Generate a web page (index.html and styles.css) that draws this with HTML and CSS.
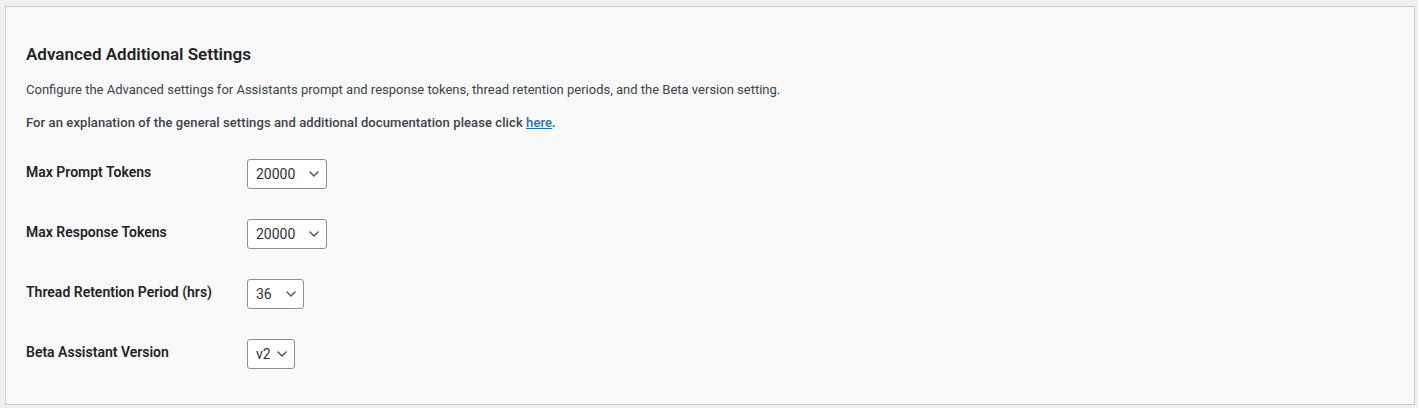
FILE: index.html
```html
<!DOCTYPE html>
<html lang="en">
<head>
<meta charset="utf-8">
<title>Advanced Additional Settings</title>
<link rel="stylesheet" href="styles.css">
</head>
<body>
<div class="wrap">
  <div class="panel">
    <h2 class="panel-title">Advanced Additional Settings</h2>
    <p class="desc">Configure the Advanced settings for Assistants prompt and response tokens, thread retention periods, and the Beta version setting.</p>
    <p class="desc desc-strong">For an explanation of the general settings and additional documentation please click <a href="#" class="link">here</a>.</p>
    <div class="form-table">
      <div class="row">
        <label class="row-label" for="max-prompt">Max Prompt Tokens</label>
        <div class="select-wrap">
          <select id="max-prompt" class="select select-tokens">
            <option>20000</option>
          </select>
          <svg class="chev" width="10" height="6" viewBox="0 0 10 6" aria-hidden="true"><polyline points="1,1 5,5 9,1" fill="none" stroke="#50575e" stroke-width="1.5" stroke-linecap="round" stroke-linejoin="round"/></svg>
        </div>
      </div>
      <div class="row">
        <label class="row-label" for="max-response">Max Response Tokens</label>
        <div class="select-wrap">
          <select id="max-response" class="select select-tokens">
            <option>20000</option>
          </select>
          <svg class="chev" width="10" height="6" viewBox="0 0 10 6" aria-hidden="true"><polyline points="1,1 5,5 9,1" fill="none" stroke="#50575e" stroke-width="1.5" stroke-linecap="round" stroke-linejoin="round"/></svg>
        </div>
      </div>
      <div class="row">
        <label class="row-label" for="retention">Thread Retention Period (hrs)</label>
        <div class="select-wrap">
          <select id="retention" class="select select-hours">
            <option>36</option>
          </select>
          <svg class="chev" width="10" height="6" viewBox="0 0 10 6" aria-hidden="true"><polyline points="1,1 5,5 9,1" fill="none" stroke="#50575e" stroke-width="1.5" stroke-linecap="round" stroke-linejoin="round"/></svg>
        </div>
      </div>
      <div class="row">
        <label class="row-label" for="beta">Beta Assistant Version</label>
        <div class="select-wrap">
          <select id="beta" class="select select-version">
            <option>v2</option>
          </select>
          <svg class="chev" width="10" height="6" viewBox="0 0 10 6" aria-hidden="true"><polyline points="1,1 5,5 9,1" fill="none" stroke="#50575e" stroke-width="1.5" stroke-linecap="round" stroke-linejoin="round"/></svg>
        </div>
      </div>
    </div>
  </div>
</div>
</body>
</html>
```
FILE: styles.css
```css
* {
  box-sizing: border-box;
}

html, body {
  margin: 0;
  padding: 0;
  background: #f0f0f1;
}

body {
  font-family: Roboto, "Liberation Sans", sans-serif;
  color: #3c434a;
  font-size: 13px;
}

.wrap {
  padding: 6px 3px 0 5px;
}

.panel {
  background: #f9f9f9;
  border: 1px solid #c9cacc;
  height: 399px;
  padding: 36px 20px 20px 20px;
}

.panel-title {
  margin: 0;
  font-size: 17px;
  line-height: 22px;
  font-weight: 600;
  color: #1d2327;
}

.desc {
  margin: 15px 0 0 0;
  font-size: 13px;
  line-height: 20px;
  color: #3c434a;
}

.desc-strong {
  margin-top: 13px;
  font-weight: 500;
  letter-spacing: 0.09px;
  color: #3c434a;
}

.link {
  color: #2271b1;
  text-decoration: underline;
}

.form-table {
  margin-top: 11px;
  display: flex;
  flex-direction: column;
}

.row {
  display: flex;
  align-items: center;
  height: 60px;
}

.row-label {
  align-self: flex-start;
  padding-top: 18px;
  width: 221px;
  flex: none;
  font-size: 14px;
  line-height: 20px;
  font-weight: 600;
  color: #1d2327;
}

.select-wrap {
  position: relative;
  display: flex;
}

.select {
  appearance: none;
  -webkit-appearance: none;
  height: 30px;
  margin: 0;
  padding: 0 24px 0 8px;
  border: 1px solid #8c8f94;
  border-radius: 3px;
  background: #ffffff;
  color: #2c3338;
  font-family: Roboto, "Liberation Sans", sans-serif;
  font-size: 14px;
  line-height: 28px;
}

.select-tokens {
  width: 80px;
}

.select-hours {
  width: 57px;
}

.select-version {
  width: 48px;
}

.chev {
  position: absolute;
  right: 8px;
  top: 12px;
  pointer-events: none;
}
```
